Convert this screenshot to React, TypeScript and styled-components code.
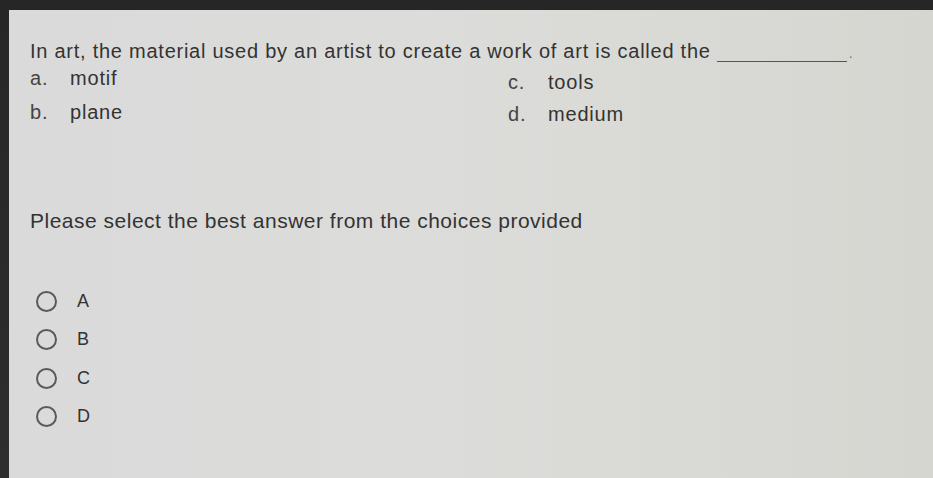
import React from "react";
import styled, { createGlobalStyle } from "styled-components";

const GlobalStyle = createGlobalStyle`
  html, body {
    margin: 0;
    padding: 0;
    height: 100%;
    background: #2a2a2a;
  }
  #root {
    height: 100%;
  }
`;

const Screen = styled.div`
  height: 100%;
  box-sizing: border-box;
  padding: 10px 0 0 9px;
  background: linear-gradient(180deg, #262626 0%, #2e2e2e 100%);
`;

const Panel = styled.main`
  height: 100%;
  box-sizing: border-box;
  padding: 29px 0 0 21px;
  background: linear-gradient(90deg, #dadada 0%, #dcdcda 45%, #d6d6d1 100%);
  font-family: "Liberation Sans", Arial, sans-serif;
  color: #333;
`;

const Question = styled.p`
  margin: 0;
  font-size: 20px;
  letter-spacing: 0.75px;
  line-height: 24px;
  display: flex;
  align-items: baseline;
`;

const Blank = styled.span`
  display: inline-block;
  width: 130px;
  margin-left: 6px;
  border-bottom: 1.5px solid #555;
  transform: translateY(4px);
`;

const Period = styled.span`
  margin-left: 2px;
  font-size: 14px;
  color: #777;
`;

const Choices = styled.div`
  display: grid;
  grid-template-columns: 478px 1fr;
  grid-auto-rows: 33px;
  margin-top: -1px;
  font-size: 20px;
  letter-spacing: 0.8px;
`;

const Choice = styled.div<{ $shift?: number }>`
  display: flex;
  align-items: center;
  transform: translateY(${(p) => p.$shift ?? 0}px);
`;

const Letter = styled.span`
  width: 40px;
  color: #444;
`;

const Prompt = styled.p`
  margin: 79px 0 0;
  font-size: 21px;
  letter-spacing: 0.5px;
  line-height: 24px;
`;

const RadioList = styled.div`
  display: flex;
  flex-direction: column;
  gap: 14.5px;
  margin-top: 56px;
  padding-left: 6px;
`;

const RadioRow = styled.label`
  display: flex;
  align-items: center;
  gap: 20px;
  height: 24px;
  font-size: 18px;
  letter-spacing: 0.5px;
  color: #333;
`;

const Circle = styled.span`
  width: 17px;
  height: 17px;
  border: 2px solid #5a5a5a;
  border-radius: 50%;
`;

const options = [
  { key: "a.", text: "motif", shift: -2 },
  { key: "c.", text: "tools", shift: 2 },
  { key: "b.", text: "plane", shift: -1 },
  { key: "d.", text: "medium", shift: 1 },
];

export default function App() {
  return (
    <>
      <GlobalStyle />
      <Screen>
        <Panel>
          <Question>
            In art, the material used by an artist to create a work of art is called the
            <Blank />
            <Period>.</Period>
          </Question>
          <Choices>
            {options.map((o) => (
              <Choice key={o.key} $shift={o.shift}>
                <Letter>{o.key}</Letter>
                {o.text}
              </Choice>
            ))}
          </Choices>
          <Prompt>Please select the best answer from the choices provided</Prompt>
          <RadioList>
            {["A", "B", "C", "D"].map((l) => (
              <RadioRow key={l}>
                <Circle />
                {l}
              </RadioRow>
            ))}
          </RadioList>
        </Panel>
      </Screen>
    </>
  );
}
